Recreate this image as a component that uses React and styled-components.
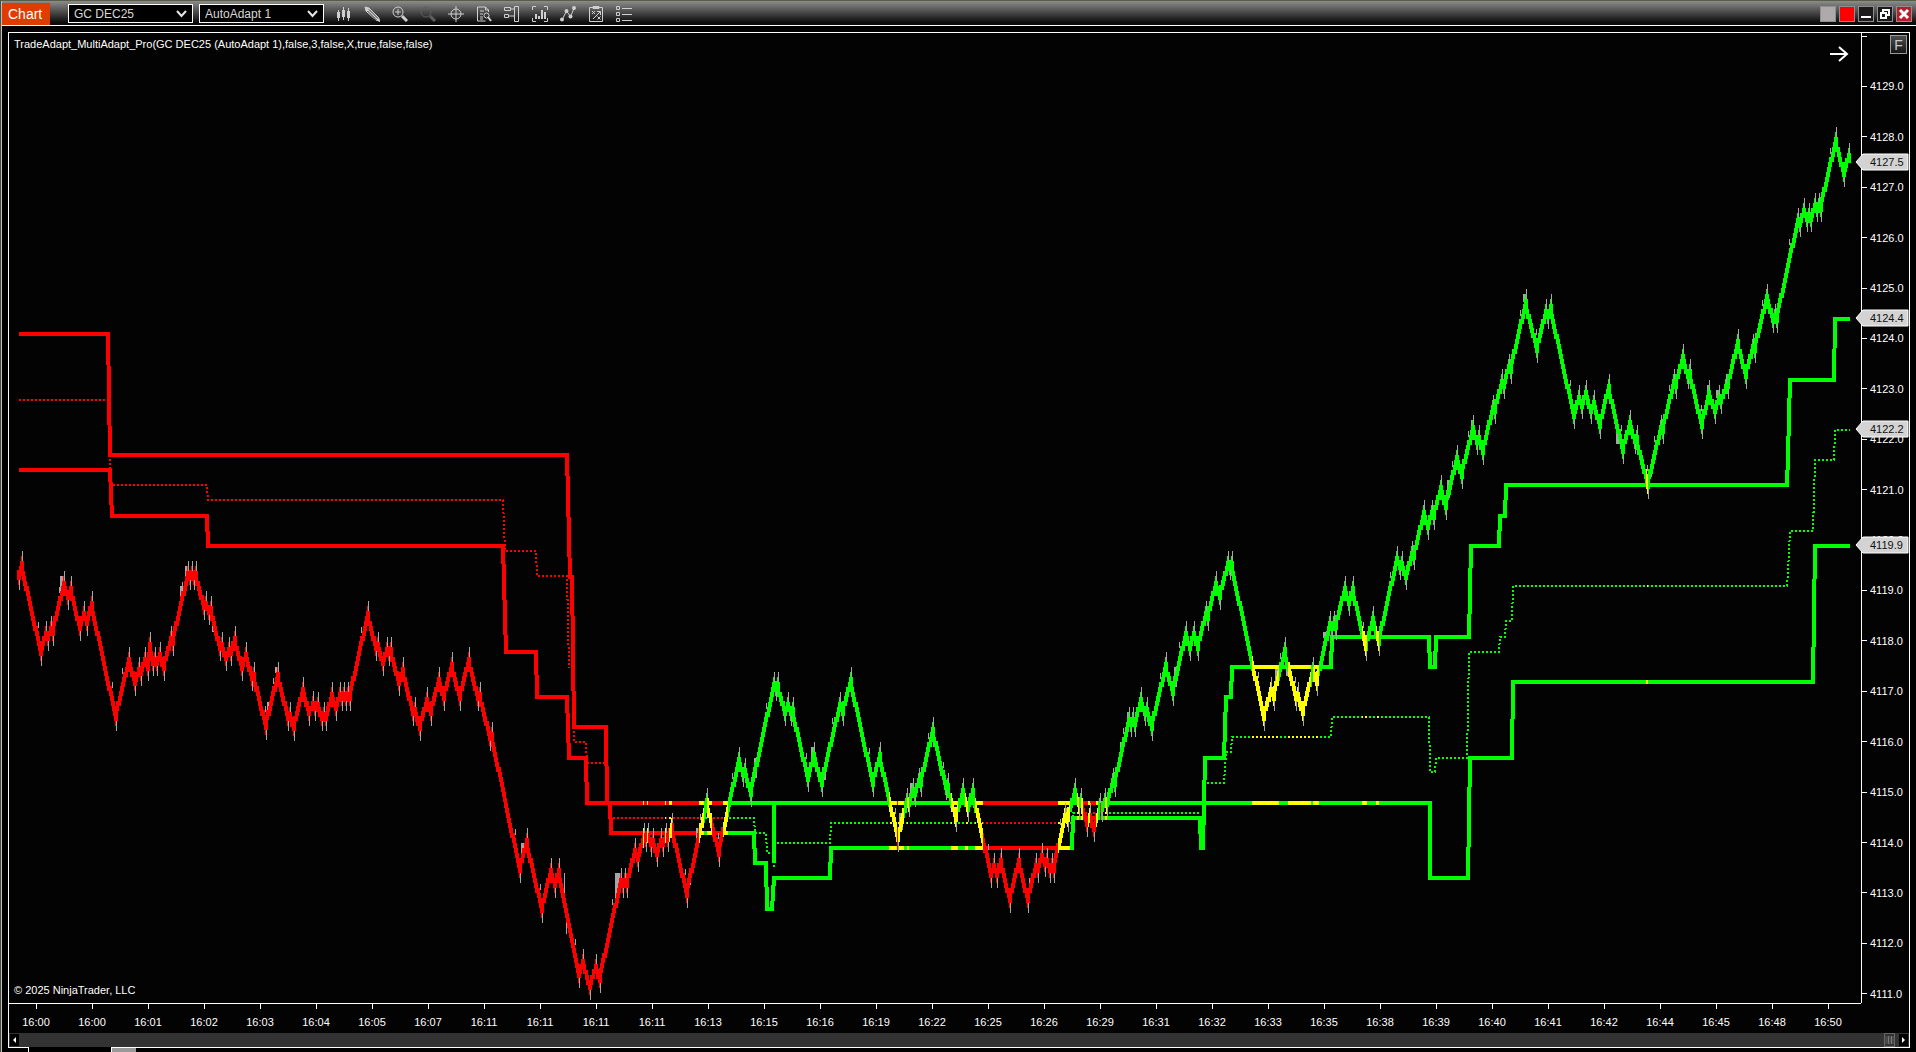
import React, { useState } from 'react';
import styled, { createGlobalStyle } from 'styled-components';

const RED = '#ff0000';
const GREEN = '#00ff00';
const YELLOW = '#ffff00';
const WICK = '#a6a6a6';

// plot coordinates: one price tick (0.1) is a little over five units high
const VIEW = { x: 9, y: 33, width: 1852, height: 970 };
const TICK = 5.037;

const times = [
  '16:00', '16:00', '16:01', '16:02', '16:03', '16:04', '16:05', '16:07', '16:11', '16:11', '16:11',
  '16:11', '16:13', '16:15', '16:16', '16:19', '16:22', '16:25', '16:26', '16:29', '16:31', '16:32',
  '16:33', '16:35', '16:38', '16:39', '16:40', '16:41', '16:42', '16:44', '16:45', '16:48', '16:50',
];

const prices = Array.from({ length: 20 }, (_, i) => (4130 - i).toFixed(1));

const markers = [4127.5, 4124.4, 4122.2, 4119.9];

// [from x, colour], each colour holds until the next entry
const trend = [
  [9, RED], [643, YELLOW], [644, RED], [647, YELLOW], [648, RED], [665, YELLOW], [666, RED],
  [669, YELLOW], [672, RED], [699, YELLOW], [704, GREEN], [707, YELLOW], [712, RED], [723, YELLOW],
  [728, GREEN], [889, YELLOW], [897, RED], [898, YELLOW], [904, GREEN], [907, YELLOW], [909, GREEN],
  [951, YELLOW], [958, GREEN], [965, YELLOW], [968, GREEN], [975, YELLOW], [983, RED], [1058, YELLOW],
  [1070, GREEN], [1077, YELLOW], [1079, GREEN], [1081, YELLOW], [1083, RED], [1088, YELLOW],
  [1090, RED], [1096, YELLOW], [1098, GREEN], [1100, RED], [1101, GREEN], [1105, YELLOW],
  [1107, GREEN], [1252, YELLOW], [1279, GREEN], [1288, YELLOW], [1311, GREEN], [1313, YELLOW],
  [1319, GREEN], [1362, YELLOW], [1367, GREEN], [1376, YELLOW], [1379, GREEN], [1646, YELLOW],
  [1648, GREEN], [1861, GREEN],
];

// swing highs and lows, measured at the wick tips
const swings = [
  [19, 590], [22, 551], [41, 666], [46, 621], [48, 651], [51, 616], [53, 646], [64, 571], [68, 610],
  [71, 576], [80, 641], [84, 601], [87, 636], [92, 591], [116, 731], [129, 647], [135, 696],
  [139, 657], [141, 686], [145, 647], [148, 681], [150, 632], [153, 676], [155, 647], [157, 676],
  [160, 642], [164, 681], [171, 626], [173, 656], [188, 561], [190, 590], [192, 561], [194, 590],
  [196, 561], [204, 620], [206, 591], [209, 625], [211, 596], [220, 661], [222, 632], [226, 671],
  [229, 637], [231, 666], [235, 626], [242, 681], [246, 642], [252, 691], [254, 662], [266, 740],
  [278, 662], [288, 731], [290, 702], [294, 741], [303, 677], [309, 726], [313, 691], [315, 721],
  [318, 692], [322, 731], [324, 702], [326, 731], [332, 682], [336, 721], [340, 682], [342, 711],
  [344, 682], [346, 711], [348, 682], [350, 711], [368, 601], [376, 661], [378, 632], [383, 676],
  [387, 637], [389, 666], [391, 637], [399, 696], [403, 657], [413, 726], [415, 697], [420, 741],
  [427, 687], [431, 726], [439, 667], [444, 711], [452, 652], [460, 711], [469, 647], [478, 711],
  [480, 682], [490, 751], [492, 722], [520, 883], [527, 828], [542, 923], [551, 858], [555, 898],
  [559, 858], [579, 988], [583, 949], [590, 1000], [596, 954], [600, 993], [621, 868], [623, 898],
  [625, 868], [627, 898], [635, 838], [638, 872], [644, 823], [646, 852], [648, 823], [651, 857],
  [653, 828], [657, 867], [661, 828], [663, 857], [666, 823], [668, 852], [672, 813], [687, 908],
  [707, 788], [719, 867], [739, 747], [743, 787], [745, 758], [751, 807], [774, 672], [776, 701],
  [778, 672], [785, 726], [788, 692], [791, 726], [793, 697], [808, 792], [814, 742], [822, 797],
  [840, 692], [843, 726], [851, 667], [873, 797], [880, 742], [898, 852], [907, 788], [909, 817],
  [913, 778], [915, 807], [919, 768], [921, 797], [933, 717], [946, 800], [948, 773], [956, 832],
  [963, 778], [968, 822], [973, 778], [991, 888], [994, 853], [997, 888], [1001, 848], [1010, 913],
  [1019, 848], [1028, 913], [1036, 853], [1038, 883], [1042, 843], [1045, 877], [1047, 848],
  [1050, 883], [1052, 853], [1054, 883], [1065, 803], [1068, 832], [1075, 778], [1079, 817],
  [1081, 788], [1087, 837], [1090, 803], [1094, 842], [1100, 793], [1102, 822], [1105, 788],
  [1107, 817], [1113, 768], [1115, 797], [1129, 707], [1131, 737], [1133, 707], [1135, 737],
  [1141, 687], [1145, 726], [1147, 697], [1152, 741], [1166, 652], [1173, 706], [1186, 621],
  [1190, 661], [1194, 621], [1198, 661], [1206, 601], [1208, 631], [1216, 571], [1220, 610],
  [1228, 551], [1230, 580], [1232, 551], [1264, 731], [1271, 677], [1274, 711], [1285, 637],
  [1296, 711], [1298, 682], [1303, 726], [1313, 657], [1317, 696], [1330, 611], [1332, 641],
  [1334, 611], [1336, 640], [1345, 576], [1349, 616], [1353, 576], [1366, 661], [1373, 606],
  [1379, 656], [1397, 546], [1400, 580], [1402, 551], [1406, 590], [1412, 541], [1414, 570],
  [1424, 500], [1428, 540], [1432, 500], [1434, 530], [1441, 475], [1446, 520], [1457, 445],
  [1462, 489], [1473, 415], [1477, 455], [1479, 425], [1483, 465], [1493, 395], [1495, 424],
  [1502, 369], [1504, 399], [1509, 354], [1511, 384], [1526, 289], [1537, 363], [1546, 299],
  [1548, 329], [1551, 294], [1574, 429], [1579, 385], [1582, 419], [1586, 380], [1591, 424],
  [1594, 390], [1600, 439], [1609, 374], [1623, 464], [1630, 410], [1635, 454], [1637, 425],
  [1648, 499], [1661, 415], [1663, 444], [1674, 369], [1676, 399], [1683, 344], [1688, 389],
  [1690, 359], [1702, 439], [1709, 380], [1715, 424], [1719, 385], [1721, 414], [1726, 374],
  [1728, 399], [1738, 329], [1746, 389], [1753, 334], [1755, 363], [1767, 284], [1773, 333],
  [1775, 304], [1777, 333], [1798, 208], [1800, 237], [1804, 198], [1807, 232], [1809, 203],
  [1811, 232], [1815, 193], [1817, 222], [1819, 193], [1821, 222], [1836, 127], [1844, 187],
  [1849, 143],
];

// bars whose range reached well past the body: x, y, width, height
const longWicks = [
  [60, 576, 3, 19], [180, 586, 3, 15], [185, 566, 2, 15], [212, 622, 3, 10], [267, 702, 3, 13],
  [275, 667, 3, 6], [521, 843, 3, 15], [564, 873, 1, 22], [566, 915, 1, 19], [615, 873, 5, 25],
  [688, 873, 3, 12], [696, 828, 3, 10], [754, 758, 3, 20], [811, 747, 3, 12], [823, 768, 3, 12],
  [899, 813, 4, 17], [910, 783, 2, 12], [1029, 878, 3, 10], [1065, 808, 2, 12], [1120, 742, 2, 10],
  [1127, 712, 2, 12], [1174, 667, 3, 20], [1275, 669, 3, 15], [1286, 666, 3, 10], [1324, 632, 3, 10],
  [1387, 591, 2, 10], [1447, 480, 3, 18], [1471, 420, 2, 12], [1523, 294, 3, 8], [1616, 425, 3, 19],
  [1650, 465, 2, 12], [1707, 385, 2, 8], [1716, 390, 2, 8],
];

const upperBand = 'M19 334H108L110 455H567L570 577H572L574 727H606L607 803H774V863V803H1430V878H1468L1470 758H1512L1513 682H1813L1815 546H1850';
const lowerBand = 'M19 470H110L112 516H207L208 546H503L506 652H536L537 697H567L569 758H586L587 803H610L611 833H754L755 863H766L767 909H772L774 878H830L831 848H1072L1073 818H1200L1201 848H1203L1205 758H1224L1226 697H1231L1232 667H1331L1332 637H1429L1430 667H1435L1436 637H1469L1471 546H1499L1500 516H1505L1506 485H1787L1788 455L1790 380H1834L1835 319H1850';
const midBand = 'M19 400H108L111 485H207L208 500H503L505 551H536L537 576H567L569 668M574 731V742H586L587 763H606M613 818H754L755 833H766L767 853H772M774 865V869M777 843H830L831 823H1072L1073 813H1200M1207 783H1224L1226 752H1231L1232 737H1331L1332 717H1429L1430 772H1435L1436 758H1467L1469 652H1499L1500 637H1505L1506 621H1512L1513 586H1787L1788 571L1790 531H1813L1815 460H1834L1835 430H1850';

const box = (x, y, w, h) => `M${x} ${y}h${w}v${h}h${-w}z`;

const buildPrice = () => {
  let bodies = '';
  let wicks = '';
  const points = swings.map(([x, tip], i) => {
    const isHigh = tip < (swings[i + 1] || swings[i - 1])[1];
    return { x, tip, isHigh, y: isHigh ? tip + 10 : tip - 10 };
  });

  points.forEach((point, i) => {
    const { x, y, tip, isHigh } = point;
    bodies += box(x - 2, isHigh ? y : y - 10, 4, 10);
    bodies += box(x - 1, isHigh ? y - 5 : y, 1, 5);
    wicks += box(x, isHigh ? tip : y, 1, 10);

    const next = points[i + 1];
    if (!next) return;
    const top = isHigh ? y : y - 10;
    const end = isHigh ? next.y - 10 : next.y;
    const steps = Math.max(1, Math.round(Math.abs(end - top) / TICK));
    for (let s = 0; s <= steps; s += 1) {
      const px = Math.round(x + ((next.x - x) * s) / steps);
      const py = Math.round(top + ((end - top) * s) / steps);
      bodies += box(px - 2, py, 3, 10);
      if (steps > 8 && s === Math.round(steps * 0.75)) {
        wicks += box(isHigh ? px + 1 : px - 3, py - 4, 1, 6);
      }
    }
  });

  return { bodies, wicks };
};

const price = buildPrice();

const TrendGradient = () => (
  <linearGradient id="trend" gradientUnits="userSpaceOnUse" x1={VIEW.x} y1="0" x2={VIEW.x + VIEW.width} y2="0">
    {trend.slice(0, -1).flatMap(([from, color], i) => [
      <stop key={`${from}-a`} offset={(from - VIEW.x) / VIEW.width} stopColor={color} />,
      <stop key={`${from}-b`} offset={(trend[i + 1][0] - VIEW.x) / VIEW.width} stopColor={color} />,
    ])}
  </linearGradient>
);

const tools = [
  {
    label: 'Bar type',
    icon: (
      <g fill="currentColor" stroke="none">
        <path d="M1 6h3v6H1zM2 4h1v11H2zM6 4h3v7H6zM7 1h1v13H7zM11 5h3v7h-3zM12 2h1v13h-1z" />
      </g>
    ),
  },
  {
    label: 'Drawing tools',
    icon: (
      <>
        <path d="M1 1l4 1 9.500 9.500 1.500 4-4-1.500L2 5z" fill="currentColor" />
        <path d="M3.500 5l9 9M5 3.500l9 9" stroke="#3a3a3a" strokeWidth="1" />
      </>
    ),
  },
  {
    label: 'Zoom in',
    icon: (
      <>
        <circle cx="6" cy="6" r="5" />
        <path d="M3 6h6M6 3v6" />
        <path d="M10 10l5 5" strokeWidth="3" />
      </>
    ),
  },
  {
    label: 'Zoom out',
    dim: true,
    icon: (
      <>
        <circle cx="6" cy="6" r="5" />
        <path d="M10 10l5 5" strokeWidth="3" />
      </>
    ),
  },
  {
    label: 'Crosshair',
    icon: (
      <>
        <circle cx="8" cy="8" r="5" />
        <path d="M8 0v16M0 8h16" />
      </>
    ),
  },
  {
    label: 'Data box',
    icon: (
      <>
        <path d="M12.500 6V4l-3-3H1.500v14h8M9.500 1v3h3M4 5h4M4 8h3M4 11h3M4 13h3" />
        <circle cx="10.500" cy="9.500" r="2.500" />
        <path d="M12 11l3 4" strokeWidth="2" />
      </>
    ),
  },
  {
    label: 'Chart trader',
    icon: <path d="M10.500 .5h4v15h-4zM.5 1.500h6v3h-6zM.5 8.500h4v3h-4zM6 3h4M4 10h6" />,
  },
  {
    label: 'Data series',
    icon: (
      <>
        <path d="M4 .5H.5V4M12 .5h3.500V4M4 15.500H.5V12M12 15.500h3.500V12" />
        <path d="M4 8v5M7 10v3M10 4v9M13 6v7" strokeWidth="2" />
      </>
    ),
  },
  {
    label: 'Indicators',
    icon: (
      <>
        <path d="M2.500 13l4-8 4 5.500 3.500-8" />
        <g fill="currentColor" stroke="none">
          <circle cx="2" cy="13.500" r="2" />
          <circle cx="6.500" cy="5" r="2" />
          <circle cx="10.500" cy="10.500" r="2" />
          <circle cx="14" cy="2" r="2" />
        </g>
      </>
    ),
  },
  {
    label: 'Strategies',
    icon: (
      <>
        <path d="M1.500 1.500h13v14h-13zM5 .5h6v2H5z" />
        <path d="M4 5l3 3M7 5L4 8M9 5.500h3.500V9M12 6l-7 7M9.500 10.500l3 3M12.500 10.500l-3 3" />
      </>
    ),
  },
  {
    label: 'Properties',
    icon: <path d="M.5 .5h3v3h-3zM.5 6.500h3v3h-3zM.5 12.500h3v3h-3zM6 2.500h10M6 8.500h10M6 14.500h10" />,
  },
];

const App = () => {
  const [instrument, setInstrument] = useState('GC DEC25');
  const [interval, setInterval] = useState('AutoAdapt 1');

  return (
    <>
      <GlobalStyle />
      <ChartWindow>
        <Toolbar>
          <WindowTitle>Chart</WindowTitle>
          <Picker
            $gap="18px"
            aria-label="Instrument"
            value={instrument}
            onChange={e => setInstrument(e.target.value)}
          />
          <Picker
            $gap="6px"
            aria-label="Interval"
            value={interval}
            onChange={e => setInterval(e.target.value)}
          />
          <Tools>
            {tools.map(tool => (
              <ToolButton key={tool.label} aria-label={tool.label} $dim={tool.dim}>
                <svg width="16" height="16" viewBox="0 0 16 16" fill="none" stroke="currentColor">
                  {tool.icon}
                </svg>
              </ToolButton>
            ))}
          </Tools>
          <WindowButtons>
            <WindowButton aria-label="Instrument link" $fill="#aeaaab" />
            <WindowButton aria-label="Interval link" $fill="#ff0000" />
            <WindowButton aria-label="Minimize" $fill="#1c1a1b">
              <svg width="14" height="14" viewBox="0 0 14 14"><path d="M2 9h10v2H2z" fill="#fff" /></svg>
            </WindowButton>
            <WindowButton aria-label="Restore" $fill="#1c1a1b">
              <svg width="14" height="14" viewBox="0 0 14 14" fill="none" stroke="#fff" strokeWidth="2">
                <path d="M5 5V3h6v5H9M3 6h5v5H3z" />
              </svg>
            </WindowButton>
            <WindowButton aria-label="Close" $fill="#b3202a">
              <svg width="14" height="14" viewBox="0 0 14 14" stroke="#fff" strokeWidth="3">
                <path d="M3 3l8 8M11 3l-8 8" />
              </svg>
            </WindowButton>
          </WindowButtons>
        </Toolbar>

        <Panel>
          <Plot>
            <svg
              viewBox={`${VIEW.x} ${VIEW.y} ${VIEW.width} ${VIEW.height}`}
              preserveAspectRatio="none"
              shapeRendering="crispEdges"
              fill="none"
            >
              <defs><TrendGradient /></defs>
              <path d={midBand} stroke="url(#trend)" strokeWidth="2" strokeDasharray="2 2" />
              <path d={upperBand} stroke="url(#trend)" strokeWidth="4" />
              <path d={lowerBand} stroke="url(#trend)" strokeWidth="4" />
              <path d={longWicks.map(w => box(...w)).join('')} fill={WICK} />
              <path d={price.bodies} fill="url(#trend)" />
              <path d={price.wicks} fill={WICK} />
            </svg>
            <IndicatorName>
              TradeAdapt_MultiAdapt_Pro(GC DEC25 (AutoAdapt 1),false,3,false,X,true,false,false)
            </IndicatorName>
            <Copyright>© 2025 NinjaTrader, LLC</Copyright>
            <ReturnButton aria-label="Go to last bar">
              <svg width="20" height="18" viewBox="0 0 20 18" fill="none" stroke="#fff" strokeWidth="2">
                <path d="M1 9h17M10 2l8 7-8 7" />
              </svg>
            </ReturnButton>
          </Plot>

          <PriceAxis>
            <PriceList>
              {prices.map((value, i) => (
                <PriceLabel key={value}>{i > 0 && value}</PriceLabel>
              ))}
            </PriceList>
            {markers.map(value => (
              <PriceMarker
                key={value}
                style={{ top: `${((86.7 + (4129 - value) * 50.37 - VIEW.y) / VIEW.height) * 100}%` }}
              >
                <svg width="54" height="18" viewBox="0 0 54 18">
                  <path d="M1 9L8 1H53V17H8Z" fill="#d3d3d3" stroke="#fff" />
                </svg>
                <span>{value.toFixed(1)}</span>
              </PriceMarker>
            ))}
            <FixedButton aria-label="Fixed scale">F</FixedButton>
          </PriceAxis>

          <TimeAxis>
            {times.map((time, i) => (
              <TimeLabel key={i}>{time}</TimeLabel>
            ))}
          </TimeAxis>

          <ScrollBar>
            <ScrollButton aria-label="Scroll left">
              <svg width="3" height="6" viewBox="0 0 3 6"><path d="M3 0v6L0 3z" fill="#fff" /></svg>
            </ScrollButton>
            <ScrollThumb />
            <ScrollButton aria-label="Scroll right">
              <svg width="3" height="6" viewBox="0 0 3 6"><path d="M0 0v6l3-3z" fill="#fff" /></svg>
            </ScrollButton>
          </ScrollBar>
        </Panel>

        <TabStrip>
          <TabLead />
          <Tab />
          <AddTab aria-label="Add tab" />
          <TabRest />
        </TabStrip>
      </ChartWindow>
    </>
  );
};

const Picker = ({ $gap, value, ...rest }) => (
  <PickerRoot $gap={$gap}>
    <select value={value} {...rest}>
      <option>{value}</option>
    </select>
    <svg width="11" height="8" viewBox="0 0 11 8" fill="none" stroke="#e6e6e6" strokeWidth="2">
      <path d="M1 1l4.500 5L10 1" />
    </svg>
  </PickerRoot>
);

const GlobalStyle = createGlobalStyle`
  * {
    box-sizing: border-box;
  }

  body {
    margin: 0;
    background: #000;
    color: #fff;
    font-family: "Liberation Sans", Arial, sans-serif;
    font-size: 11px;
    overflow: hidden;
  }

  button, select {
    font-family: inherit;
    padding: 0;
    border: 0;
  }
`;

const ChartWindow = styled.div`
  display: flex;
  flex-direction: column;
  height: 100vh;
  background: #000;
  border-top: 1px solid #565c46;
  border-left: 1px solid #4a4d38;
  box-shadow: inset 1px 0 0 #bdbdbd;
`;

const Toolbar = styled.header`
  display: flex;
  align-items: center;
  height: 25px;
  margin-left: 1px;
  padding: 1px 4px 0 0;
  background: linear-gradient(#8c8c8c, #5a5a5a 35%, #0c0c0c 90%);
  border-bottom: 1px solid #fff;
`;

const WindowTitle = styled.h1`
  width: 48px;
  height: 22px;
  margin: 1px 0 0;
  padding-left: 6px;
  background: #e03c00;
  font-size: 14px;
  font-weight: 400;
  line-height: 22px;
`;

const PickerRoot = styled.label`
  display: flex;
  align-items: center;
  width: 125px;
  height: 19px;
  margin-left: ${props => props.$gap};
  padding: 0 5px;
  background: #000;
  border: 1px solid #fff;

  select {
    flex: 1;
    min-width: 0;
    appearance: none;
    background: transparent;
    color: #d8d8d8;
    font-size: 12px;
    outline: none;
  }
`;

const Tools = styled.div`
  display: flex;
  flex: 1;
  margin-left: 6px;
`;

const ToolButton = styled.button`
  display: flex;
  align-items: center;
  justify-content: center;
  width: 28px;
  height: 20px;
  background: transparent;
  color: ${props => props.$dim ? '#5e5e5e' : '#cfcfcf'};
`;

const WindowButtons = styled.div`
  display: flex;
  gap: 3px;
  margin-top: 1px;
`;

const WindowButton = styled.button`
  display: flex;
  align-items: center;
  justify-content: center;
  width: 16px;
  height: 16px;
  background: ${props => props.$fill};
  border: 1px solid #8e8e8e;
`;

const Panel = styled.main`
  display: grid;
  grid-template: minmax(0, 1fr) 30px 14px / minmax(0, 1fr) 48px;
  flex: 1;
  min-height: 0;
  margin: 6px 6px 0 7px;
  background: #030303;
  border: 1px solid #fff;
  border-bottom: 0;
`;

const Plot = styled.section`
  position: relative;

  > svg {
    display: block;
    width: 100%;
    height: 100%;
  }
`;

const IndicatorName = styled.div`
  position: absolute;
  top: 4px;
  left: 5px;
  line-height: 14px;
`;

const Copyright = styled.div`
  position: absolute;
  bottom: 6px;
  left: 5px;
  line-height: 14px;
`;

const ReturnButton = styled.button`
  position: absolute;
  top: 12px;
  right: 12px;
  height: 18px;
  background: transparent;
`;

const PriceAxis = styled.aside`
  position: relative;
  border-left: 1px solid #fff;
`;

const PriceList = styled.ul`
  display: flex;
  flex-direction: column;
  justify-content: space-between;
  height: calc(100% + 2px);
  margin: -4px 0 0;
  padding: 0;
  list-style: none;
`;

const PriceLabel = styled.li`
  display: flex;
  align-items: center;
  gap: 3px;
  height: 14px;
  line-height: 14px;

  &::before {
    content: '';
    width: 5px;
    height: 1px;
    background: #fff;
  }
`;

const PriceMarker = styled.div`
  position: absolute;
  right: 0;
  height: 18px;
  margin-top: -9px;
  color: #111;

  svg {
    display: block;
  }

  span {
    position: absolute;
    top: 2px;
    left: 15px;
    line-height: 14px;
  }
`;

const FixedButton = styled.button`
  position: absolute;
  top: 2px;
  right: 2px;
  width: 17px;
  height: 19px;
  background: linear-gradient(#4d4d4d, #161616);
  border: 1px solid #9a9a9a;
  color: #c9c9c9;
  font-size: 14px;
  line-height: 16px;
`;

const TimeAxis = styled.div`
  display: flex;
  justify-content: space-between;
  padding: 0 13px 0 7px;
  border-top: 1px solid #fff;
`;

const TimeLabel = styled.time`
  display: flex;
  flex-direction: column;
  align-items: center;
  gap: 6px;
  width: 40px;
  line-height: 14px;

  &::before {
    content: '';
    width: 1px;
    height: 5px;
    background: #fff;
  }
`;

const ScrollBar = styled.div`
  display: flex;
  align-items: center;
  grid-column: 1 / -1;
  gap: 4px;
  padding: 0 1px;
  background: #333;
`;

const ScrollButton = styled.button`
  display: flex;
  align-items: center;
  justify-content: center;
  width: 9px;
  height: 12px;
  background: #000;
`;

const ScrollThumb = styled.div`
  width: 11px;
  height: 14px;
  margin-left: auto;
  background: linear-gradient(90deg, transparent 3px, #777 3px 4px, transparent 4px 6px, #777 6px 7px, transparent 7px) #484848;
  background-clip: content-box;
  padding: 2px 0;
  border: 1px solid #666;
`;

const TabStrip = styled.footer`
  display: flex;
  height: 5px;
  margin: 0 6px 0 7px;
`;

const TabLead = styled.div`
  width: 20px;
  border-top: 1px solid #fff;
`;

const Tab = styled.div`
  width: 84px;
  border: solid #fff;
  border-width: 0 1px;
`;

const AddTab = styled.button`
  width: 24px;
  background: #999;
  border-top: 1px solid #fff;
`;

const TabRest = styled.div`
  flex: 1;
  border-top: 1px solid #fff;
`;

export default App;
